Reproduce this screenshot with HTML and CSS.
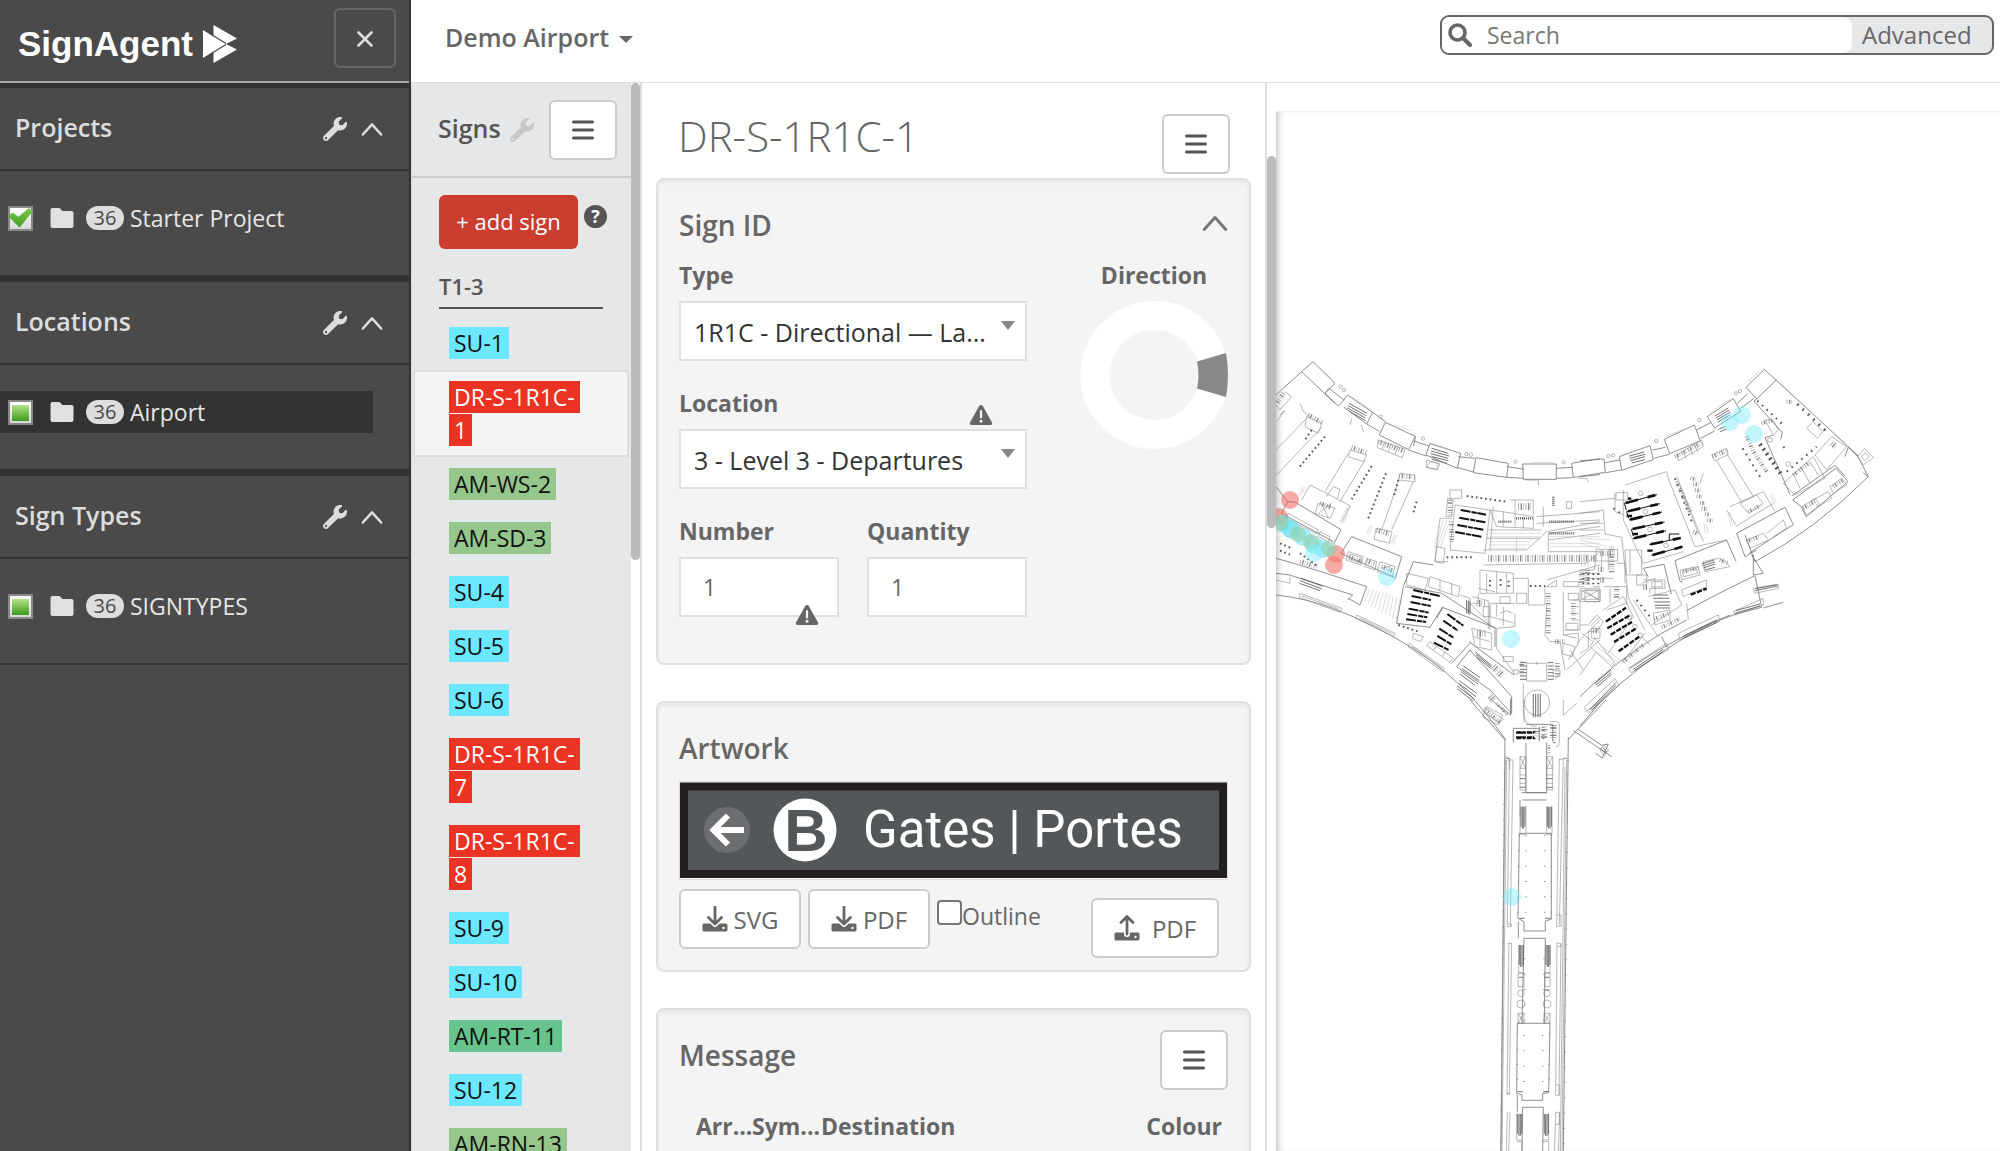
FILE: index.html
```html
<!DOCTYPE html>
<html lang="en">
<head>
    <meta charset="UTF-8">
    <meta name="viewport" content="width=device-width, initial-scale=1.0">
    <title>SignAgent - Demo Airport</title>
    <link rel="stylesheet" href="styles.css">
</head>
<body>
    <!-- shared icons -->
    <svg class="defs" width="0" height="0" aria-hidden="true">
        <symbol id="i-wrench" viewBox="0 0 512 512">
            <path d="M507.73 109.1c-2.24-9.03-13.54-12.09-20.12-5.51l-74.36 74.36-67.88-11.31-11.31-67.88 74.36-74.36c6.62-6.62 3.43-17.9-5.66-20.16-47.38-11.74-99.55.91-136.58 37.93-39.64 39.64-50.55 97.1-34.05 147.2L18.74 402.76c-24.99 24.99-24.99 65.51 0 90.5 24.99 24.99 65.51 24.99 90.5 0l213.21-213.21c50.12 16.71 107.47 5.68 147.37-34.22 37.07-37.07 49.7-89.32 37.91-136.73zM64 472c-13.25 0-24-10.75-24-24 0-13.26 10.75-24 24-24s24 10.74 24 24c0 13.25-10.75 24-24 24z"/>
        </symbol>
        <symbol id="i-up" viewBox="0 0 24 24">
            <path d="M2 18 12 7l10 11" fill="none" stroke="currentColor" stroke-width="2.8" stroke-linecap="round" stroke-linejoin="round"/>
        </symbol>
        <symbol id="i-folder" viewBox="0 0 24 22">
            <path d="M2.500 1h7l3 3h9a2 2 0 0 1 2 2v13a2 2 0 0 1-2 2h-19a2 2 0 0 1-2-2V3a2 2 0 0 1 2-2z"/>
        </symbol>
        <symbol id="i-menu" viewBox="0 0 24 24">
            <path d="M2.500 4h19M2.500 12h19M2.500 20h19" fill="none" stroke="currentColor" stroke-width="3" stroke-linecap="round"/>
        </symbol>
        <symbol id="i-warn" viewBox="0 0 24 22">
            <path d="M10.300 1.800Q12 0 13.700 1.800L23 18.500Q23.600 21 21.500 21h-19Q.4 21 1 18.500z"/>
            <path d="M12 7v6.500" stroke="#f4f4f4" stroke-width="2.200" stroke-linecap="round"/>
            <circle cx="12" cy="17.200" r="1.500" fill="#f4f4f4"/>
        </symbol>
        <symbol id="i-download" viewBox="0 0 26 26">
            <rect x=".5" y="17.500" width="25" height="8" rx="1.500"/>
            <path d="M7 12l6 6 6-6" fill="none" stroke="#fff" stroke-width="6" stroke-linecap="round" stroke-linejoin="round"/>
            <path d="M13 1v17M6.500 11.500 13 18l6.500-6.500" fill="none" stroke="currentColor" stroke-width="2.800" stroke-linecap="round" stroke-linejoin="round"/>
            <circle cx="21.500" cy="22" r="1.200" fill="#fff"/>
        </symbol>
        <symbol id="i-upload" viewBox="0 0 26 26">
            <rect x=".5" y="17.500" width="25" height="8" rx="1.500"/>
            <path d="M13 4v15" fill="none" stroke="#fff" stroke-width="6" stroke-linecap="round"/>
            <path d="M13 19V2M7 7.500 13 1.500l6 6" fill="none" stroke="currentColor" stroke-width="2.800" stroke-linecap="round" stroke-linejoin="round"/>
            <circle cx="21.500" cy="22" r="1.200" fill="#fff"/>
        </symbol>
    </svg>

    <aside class="sidebar">
        <div class="brand">
            <a class="logo" href="#">SignAgent
                <svg width="34" height="38" viewBox="0 0 34 38">
                    <path d="M0 5l9.500 6v16L0 33z" fill="#fff"/>
                    <path d="M9 11 23 19 9 27z" fill="#fff"/>
                    <path d="M10.500 0 34 13.500 23 19l11 5.500L10.500 38z" fill="#fff"/>
                    <path d="M10 10.500 23 18.500M10 27.500l13-8" stroke="#4a4a4a" stroke-width="1.200"/>
                </svg>
            </a>
            <button class="close-btn" type="button" aria-label="Close menu">
                <svg width="16" height="16" viewBox="0 0 16 16"><path d="M1.500 1.500l13 13M14.500 1.500l-13 13" stroke="#ddd" stroke-width="2.600" stroke-linecap="round"/></svg>
            </button>
        </div>

        <section class="group">
            <div class="group-head">
                <h2>Projects</h2>
                <svg class="wrench"><use href="#i-wrench"/></svg>
                <svg class="chevron"><use href="#i-up"/></svg>
            </div>
            <div class="group-body">
                <label class="node">
                    <input class="tick" type="checkbox" checked>
                    <svg class="folder"><use href="#i-folder"/></svg>
                    <span class="count">36</span>Starter Project
                </label>
            </div>
        </section>

        <section class="group">
            <div class="group-head">
                <h2>Locations</h2>
                <svg class="wrench"><use href="#i-wrench"/></svg>
                <svg class="chevron"><use href="#i-up"/></svg>
            </div>
            <div class="group-body">
                <label class="node node-active">
                    <input class="tick tick-part" type="checkbox">
                    <svg class="folder"><use href="#i-folder"/></svg>
                    <span class="count">36</span>Airport
                </label>
            </div>
        </section>

        <section class="group">
            <div class="group-head">
                <h2>Sign Types</h2>
                <svg class="wrench"><use href="#i-wrench"/></svg>
                <svg class="chevron"><use href="#i-up"/></svg>
            </div>
            <div class="group-body">
                <label class="node">
                    <input class="tick tick-part" type="checkbox">
                    <svg class="folder"><use href="#i-folder"/></svg>
                    <span class="count">36</span>SIGNTYPES
                </label>
            </div>
        </section>
    </aside>

    <div class="app">
        <header class="topbar">
            <button class="project-btn" type="button">Demo Airport <span class="caret"></span></button>
            <form class="search">
                <div class="search-box">
                    <svg width="24" height="24" viewBox="0 0 24 24"><circle cx="9.500" cy="9.500" r="7.500" fill="none" stroke="#666" stroke-width="3.600"/><path d="M15 15l7 7" stroke="#666" stroke-width="4" stroke-linecap="round"/></svg>
                    <input type="text" placeholder="Search" aria-label="Search">
                </div>
                <button class="advanced" type="button">Advanced</button>
            </form>
        </header>

        <div class="columns">
            <nav class="signs">
                <div class="signs-head">
                    <h2>Signs</h2>
                    <svg class="wrench"><use href="#i-wrench"/></svg>
                    <button class="menu-btn" type="button" aria-label="Signs menu"><svg><use href="#i-menu"/></svg></button>
                </div>
                <div class="signs-tools">
                    <button class="add-btn" type="button">+ add sign</button>
                    <span class="help">?</span>
                </div>
                <h3 class="level">T1-3</h3>
                <ul class="sign-list">
                    <li><a class="tag su" href="#">SU-1</a></li>
                    <li class="selected"><a class="tag dr" href="#">DR-S-1R1C-1</a></li>
                    <li><a class="tag am" href="#">AM-WS-2</a></li>
                    <li><a class="tag am" href="#">AM-SD-3</a></li>
                    <li><a class="tag su" href="#">SU-4</a></li>
                    <li><a class="tag su" href="#">SU-5</a></li>
                    <li><a class="tag su" href="#">SU-6</a></li>
                    <li><a class="tag dr" href="#">DR-S-1R1C-7</a></li>
                    <li><a class="tag dr" href="#">DR-S-1R1C-8</a></li>
                    <li><a class="tag su" href="#">SU-9</a></li>
                    <li><a class="tag su" href="#">SU-10</a></li>
                    <li><a class="tag rt" href="#">AM-RT-11</a></li>
                    <li><a class="tag su" href="#">SU-12</a></li>
                    <li><a class="tag am" href="#">AM-RN-13</a></li>
                </ul>
            </nav>
            <div class="scroll scroll-signs"><span></span></div>

            <main class="detail">
                <div class="detail-head">
                    <h1>DR-S-1R1C-1</h1>
                    <button class="menu-btn" type="button" aria-label="Sign menu"><svg><use href="#i-menu"/></svg></button>
                </div>

                <section class="panel panel-id">
                    <div class="panel-head">
                        <h2>Sign ID</h2>
                        <svg class="chevron"><use href="#i-up"/></svg>
                    </div>
                    <div class="id-grid">
                        <div class="fields">
                            <div class="field wide">
                                <label for="type">Type</label>
                                <div class="select">
                                    <select id="type"><option>1R1C - Directional — La...</option></select>
                                </div>
                            </div>
                            <div class="field wide">
                                <label for="location">Location</label>
                                <div class="select">
                                    <select id="location"><option>3 - Level 3 - Departures</option></select>
                                    <svg class="warn warn-top"><use href="#i-warn"/></svg>
                                </div>
                            </div>
                            <div class="field">
                                <label for="number">Number</label>
                                <div class="box">
                                    <input id="number" type="text" value="1">
                                    <svg class="warn warn-bottom"><use href="#i-warn"/></svg>
                                </div>
                            </div>
                            <div class="field">
                                <label for="quantity">Quantity</label>
                                <div class="box"><input id="quantity" type="text" value="1"></div>
                            </div>
                        </div>
                        <div class="direction">
                            <span>Direction</span>
                            <svg width="148" height="150" viewBox="0 0 148 150">
                                <circle cx="74.500" cy="75" r="59.500" fill="none" stroke="#fff" stroke-width="29"/>
                                <path d="M117 61.500 146 53q4 22 0 44l-29-8.500q3-13.500 0-27z" fill="#888"/>
                            </svg>
                        </div>
                    </div>
                </section>

                <section class="panel panel-art">
                    <div class="panel-head"><h2>Artwork</h2></div>
                    <svg class="artwork" viewBox="0 0 549 99">
                        <rect x=".5" y=".5" width="548" height="98" fill="#fff" stroke="#ddd"/>
                        <rect x="1" y="1.500" width="547" height="95.500" fill="#231f20"/>
                        <rect x="9" y="9.500" width="531" height="79.500" fill="#54575a"/>
                        <circle cx="48" cy="49" r="23" fill="#6d6e71"/>
                        <path d="M65 49H34M49 34.500 34.500 49 49 63.500" fill="none" stroke="#fff" stroke-width="6"/>
                        <circle cx="126" cy="49" r="31.500" fill="#fff"/>
                        <text class="art-letter" x="127" y="70" text-anchor="middle">B</text>
                        <text class="art-text" x="184" y="66">Gates | Portes</text>
                    </svg>
                    <div class="art-tools">
                        <button class="file-btn" type="button"><svg><use href="#i-download"/></svg>SVG</button>
                        <button class="file-btn" type="button"><svg><use href="#i-download"/></svg>PDF</button>
                        <label class="outline"><input type="checkbox">Outline</label>
                        <button class="file-btn upload" type="button"><svg><use href="#i-upload"/></svg>PDF</button>
                    </div>
                </section>

                <section class="panel panel-msg">
                    <div class="panel-head">
                        <h2>Message</h2>
                        <button class="menu-btn" type="button" aria-label="Message menu"><svg><use href="#i-menu"/></svg></button>
                    </div>
                    <table class="message">
                        <thead>
                            <tr><th class="c-arrow">Arr...</th><th class="c-symbol">Sym...</th><th>Destination</th><th class="c-colour">Colour</th></tr>
                        </thead>
                    </table>
                </section>
            </main>
            <div class="scroll scroll-detail"><span></span></div>

            <div class="map">
                <svg class="plan" viewBox="1276 83 724 1068" preserveAspectRatio="xMinYMin slice">
                    <!-- west wing -->
                    <g class="ink" transform="translate(1270 340) scale(.3333)">
                        <g class="wall">
                            <path d="M18 165 95 95 129 65 195 130 165 160M95 95l100 95M165 160l12-15 45 35-17 18zM222 180l10-15 76 52-18 35-68-50M308 217l38 28M290 252l38 22M328 285l18-38 90 42-20 40zM436 290l-5 28M416 330l52 18M432 303l45 15M468 345l12-35 92 30-10 45zM565 350l50 5M560 382l50 14M610 398l8-45 97 17-5 42zM712 380l50 8M710 412l50 3M758 372h101v46H760zM860 385l48-3M860 415l48-2M905 370l85-14M905 370l5 42 80-8"/>
                            <path d="M18 655q110 30 272 85l-20 55-35-20M18 765q90 10 170 40 130 50 240 120 110 70 190 160 50 60 90 115M18 700l40 5 190 60-15 15"/>
                            <path d="M18 440l35 45 23 2 137 82-20 40M53 485l-18 35 155 85M213 640l32-50 150 60-20 68M213 640l160 72M400 740l30-75 60 10M380 850l100 12 37-60 160 62M380 850l20-110M405 740l110 20 160 105 0 55M520 800l-20 35M597 905l135 100M560 980l100 70 65 70v-50L600 930zM545 970l55-60M722 1075v50l-30-25"/>
                        </g>
                        <g class="thin">
                            <path d="M110 230l45 20-10 30-40-20zM110 235 18 330M155 262 20 405M240 330l50 15-10 20-45-15zM235 340l-70 115M285 360l-75 125M390 400l45 5v20l-50-5zM385 425l-50 145M430 425l-65 145M318 565l48 10-8 35-45-12zM120 435l120 62-25 50M120 435l-25 45M145 490l50 15-15 30-45-15zM145 520l40-30M155 490l20 45M325 300l80 28-8 25-75-30zM345 305l-10 25M365 310l-10 25M385 318l-10 25M45 155l20 15-35 40-12-15M90 190l10 25 20 15M30 225l15-15-25 35M470 360l40 12-8 18-34-10zM170 470l20-30 20 8-8 28"/>
                            <path d="M540 450h35v25h-35zM533 475l17 5-5 50h-17zM555 495l105 15-15 130-105-10zM545 535h-35l-15 130h40M500 620l25 5-5 45-25-5zM660 510l70 10 60 10v35l-110-5zM720 480h70v45M735 480v80M700 515v45M760 530v35M640 630h130l60-55 160-30M655 570h160M650 595h160M640 675l310-5 40-35M670 500l-10 130M800 530l190-15M800 550l190-10M835 580l155-20M835 600l155-20M835 635h155M835 580v55M820 500v60M890 485v20h15v-20zM630 690l100 10v60h-100zM650 700v60M680 695v65M710 700v60M730 715h45v80M625 745l50 10M775 795h50v-60M830 720l160-45M830 740l30-20v20zM880 725h45v15h-45zM930 700h60M970 740h20M660 790h75M680 790v40M700 800v55M660 830l75 20M735 820v40l-55 5v60l50 70M830 795l-5 90 15 20h30l15 85M880 755v130l40 10M910 780h20v90h-45M880 885l45-5v30l-30 50M920 910l70-70M890 990l100-90M940 990l-40-60M870 1000l-15 18M770 970h60v53h-60z"/>
                            <path d="M410 700l65 15-10 35-55-15zM480 710l90 30-5 30-90-30zM510 720v35M545 730v35M570 765l30 10v40M605 770l50 12v85M660 790v80M605 865l60 15v50l-50-10zM610 890l50 15M630 868v50M235 635l45 15-7 25-45-15zM240 642l34 11-4 14-34-11zM290 655l30 10-5 25-30-10zM330 665l45 15-8 30-45-15zM335 685l30-8M55 520l90 50-5 12-92-48zM150 575l30 15-5 15-30-15zM60 710v20l-42-10M90 760l125 45-5 12-122-45zM96 768l112 40M260 825l115 55-5 10-113-55zM268 834l100 48M418 910l105 75-5 10-103-75zM426 920l90 65M430 880l30 10-8 15-25-10zM480 905l70 50-10 12-70-50zM500 918l-8 12M525 935l-8 14M650 1100l48 25-15 30-45-25zM655 1070l55 50M760 1030v80q0 50 40 50M800 965v10M480 365l25 5-5 18-30-5zM765 420h40v15M245 235l-5 20M275 255l5 20M925 415h25l5 12"/>
                            <path d="M600 790l60 60M625 760v30h-20M640 800h20v30h-20zM690 770h30v20h-30zM740 760h30v30h-30zM690 820l20-8 18 8M895 760h30v20h-30zM945 750h45v35h-45zM950 755l38 26M888 850h36v20h-36zM880 910l35 10-8 30-30-8zM960 860l30-30M935 880l30 22M905 800h22M905 820h22M905 840h22M745 990h-14v12h14zM850 990h20v20h-20zM700 950h30v15h-30z"/>
                        </g>
                        <circle class="thin" cx="801" cy="1088" r="38"/>
                        <g class="thin">
                            <circle cx="211" cy="140" r="5"/><circle cx="222" cy="150" r="5"/><circle cx="332" cy="230" r="5"/><circle cx="459" cy="296" r="5"/><circle cx="589" cy="342" r="5"/><circle cx="603" cy="344" r="5"/><circle cx="736" cy="365" r="5"/><circle cx="881" cy="367" r="5"/>
                        </g>
                        <path class="faint" d="M150 85l35 30M375 255l50 18M480 313l85 25M785 367h65M245 170l60 40"/>
                        <path class="faint" d="M300 745l-16 40M310 748l-16 44M320 751l-16 48M330 754l-16 50M340 757l-15 54M350 760l-14 58M360 764l-13 60M370 768l-12 62M380 772l-12 64M390 776l-12 66M540 540l-30 85M530 540l-28 85M520 540l-22 85M510 540l-16 85M660 580h150M660 590h150M660 605h120M660 615h120M660 625h110M740 590v50M840 590h150M840 610h150M840 620h150M105 440l-14 30M100 437l-14 30M240 500l-20 50M232 500l-22 46M380 585l-12 30M374 583l-12 30M308 555l-12 30M302 553l-12 30"/>
                        <path class="bars" d="M237 190l54 30M234 197l54 30M232 204l54 30M237 214l50 28M485 325l50 15M483 333l54 15M482 341l52 14M485 350l50 12M485 358l46 12M92 714l66 25M90 722l66 25M88 730l62 22M580 978l50 35M576 986l52 36M572 994l52 38M570 1002l45 34M568 1022l52 38M566 1030l52 40M562 1038l52 40M562 1046l48 38M615 935l50 42M618 943l46 38M620 951l42 34M750 968h20M750 978h20M750 988h20M750 998h20M750 1008h20M750 1018h20M833 968h18M833 978h18M833 988h18M833 998h18M833 1008h18M833 1018h18M790 1062v70M797 1062v70M804 1062v70M811 1062v70M590 780v40M595 782v40M600 784v40"/>
                        <path class="belts" stroke-width="6" stroke-dasharray="30 3 16 2" d="M572 510l76 14M568 533l78 14M562 555l78 14M556 576l78 14M430 750l80 18M425 768l58 12M422 786l60 12M416 806l60 12M412 822l60 10M408 838l60 8M532 822l48 35M520 842l44 30M508 866l44 28M502 888l44 26M492 908l44 22M738 1178h54M738 1192h54"/>
                        <path class="marks" stroke-width="6" stroke-dasharray="5 9" d="M590 468l125 18M530 652h75M125 270l-20 30M165 290l-80 95M305 378l-60 100M348 400l-55 140M440 485l-12 40M385 420l-12 45M30 610l35 15M30 632l30 12M90 640l55 40M660 720v25M692 718v25M716 722v20M940 700v40M955 700v40M970 700v40M985 700v40M780 738h45M385 855l60 20"/>
                        <path class="marks" stroke-width="7" stroke-dasharray="3 3" d="M838 545h74M838 580h76M850 470v30M738 535h50M685 545h40"/>
                        <path class="rooms" stroke-width="20" d="M655 655h320M745 500h40M670 980l30 30M660 1070l15 15M800 1165v30M822 1160v35M850 1155v40M622 880h25M620 790h25"/>
                        <path class="rooms" stroke-width="14" d="M115 225l42 22M245 322l44 16M388 408l46 4M238 652l38 14M290 662l25 10M335 680l32 12M320 570l40 12M150 490l34 12M325 305l75 28M40 160l-20 30M90 665l50 15M855 905h30M545 545v60M540 480v50M835 760v120M910 790v50M755 965v40M862 970v40"/>
                    </g>

                    <!-- east wing -->
                    <g class="ink" transform="translate(1580 340) scale(.3333)">
                        <g class="wall">
                            <path d="M0 362l72-5 4 40-76 12M75 368l45-8M78 398l45-8M118 350l92-33 10 42-95 32zM218 330l38-8M222 355l45-12M253 298l90-43 18 48-92 38zM350 270l42-22M362 295l42-22M382 230l78-54 22 38-78 50zM472 190l30-28M482 205l40-30M498 142l55-54 250 230 28 30M498 142l32 35 60-58M530 177l-8 6 85 95-5 20M580 285l-25 8 75 170M635 468l130-92 30 32M638 480l130-95 36 40-125 105-15-30zM795 350l10-28 25 20 35 68q-160 160-340 255l-30-80M865 410l-15-12M470 580l145-78 25 52-132 85M470 580l25 70 35-20"/>
                            <path d="M285 662l155-62 28 64M285 662l15 62 8 2M190 685l62-12 22 90M190 685l15 25M320 812q80-45 205-105l20 95q-150 30-285 125Q100 1030 0 1158M515 645l35 55-30 5v-60M0 1070q110-110 245-190l75-40M245 890l15 32M150 985q130-90 300-160M610 787l-60 17"/>
                        </g>
                        <g class="thin">
                            <path d="M135 435l125-40 5 20M265 415l80 205 95-20M290 410l80 195M300 440l55 140M395 345l45-20 5 18-40 20zM410 362l75 125M440 340l80 130M480 490l50-25 20 25-45 30zM450 500l100-45 35 60M440 510l30 48 110-68M290 345l75-45 5 20-75 42zM310 335l8 20M330 325l8 20M345 315l8 20M370 400l-10 30M108 458h35v22h-35zM105 460v55l25 10M130 450v90l60 130 120-35M0 485l105-10M0 520l70-10 5 72 50 10 20 180 50 100M0 550h70M0 570h70M48 628h65v35H48zM48 650l-5 40h-43M65 630v55M85 630v60M110 670h25v60M0 745h60v40H0zM70 740h70v50l-60 20M90 745v45M0 715h100M135 630h50v75h-45zM150 630v70M190 720h65v25h-45v15M185 730l40-15v45M205 770l80-20 20 45-90 60M160 780l75 110M320 790l5 50"/>
                            <path d="M300 690l55-10 5 25-55 15zM307 694l42-8 4 14-42 10zM370 665l45-10 20 10 15 15-75 15zM305 750l75-30v20l-70 30zM665 500l40-25 15 20-40 30zM700 480l45-25 10 20-40 25zM750 440l35-25 15 20-40 25zM500 600l50-20 15 20-55 25zM560 580l50-40 10 25-40 25M610 430l90-80 35 65-90 50zM640 400l20 45M665 385l25 45M690 365l25 40M705 345l50-55 45 30-60 70zM680 265l20-20 28 30-15 20zM555 240l25 45 15-15-15-30zM832 350l22-25 26 28-30 22zM845 350l12-12 10 12-12 12zM105 1016l12 20-90 82-15-15zM145 985l115-75 5 18-112 70zM295 880l120-55 5 18-120 58zM460 815l90-40v20l-85 30zM520 745l75-12v12l-70 15zM0 855h25l25-30 20 20-20 30H25v50L0 940M35 865h25v30H35zM30 920l65 60 10-10-60-75zM0 1005l50-70M70 810l60-40 30 60-75 110M195 880l-70 90M185 890l25 25M220 820l50-10v30l-45 15zM5 752h50v26H5zM5 752l50 26M55 752l-50 26M170 705h30v30h-30zM215 725h32v16h-32z"/>
                            <circle cx="85" cy="348" r="5"/><circle cx="99" cy="346" r="5"/><circle cx="229" cy="303" r="5"/><circle cx="358" cy="240" r="5"/><circle cx="468" cy="160" r="5"/><circle cx="480" cy="153" r="5"/><circle cx="570" cy="300" r="7"/><circle cx="625" cy="372" r="7"/><circle cx="182" cy="460" r="7"/><circle cx="196" cy="515" r="7"/><circle cx="210" cy="568" r="7"/><circle cx="258" cy="616" r="7"/><circle cx="148" cy="832" r="7"/><circle cx="165" cy="860" r="7"/><circle cx="180" cy="886" r="7"/>
                        </g>
                        <path class="faint" d="M505 125l30-30M390 218l60-40M258 288l80-30M125 345l80-25M0 600l80 20M0 610l60 15M0 595l90 5M5 640v40M15 640v40M25 640v40M450 515l8 45M444 515l8 45M575 460l15 28M570 465l15 28M372 550l4 30M380 550l4 30M40 930l70 50M50 920l70 50M60 915l60 45M596 124l210 200"/>
                        <path class="bars" d="M405 228l40-24M408 234l40-24M411 240l40-24M414 246l34-20M148 348l44-12M149 355l46-12M151 362l44-12M155 369l40-10M365 672l38-12M367 678l38-12M370 684l36-12M375 690l30-8M220 765h44M220 775h48M222 786h48M224 796h46M225 804h46M45 1030l48-40M48 1035l46-38M52 1040l42-36M160 988l90-60M164 992l84-56M30 1108l78-80M36 1110l72-74M310 888l100-48M308 896l105-50M465 820l75-22M468 812l72-20M525 752l68-14M527 746l64-12M415 268l20-8M420 275l20-8"/>
                        <path class="belts" stroke-width="3" d="M133 490l98-26M140 515l100-24M147 540l99-24M154 568l100-22M158 596l100-24M208 614l94-20M214 646l94-26M133 490l6 20M140 515l6 20M154 568l6 20M268 600v-18h30"/>
                        <path class="belts" stroke-width="8" stroke-dasharray="38 30 24 60" d="M137 489l94-25M144 514l96-23M151 539l95-23M158 567l96-21M162 595l96-23M212 613l90-19M218 645l90-25"/>
                        <path class="belts" stroke-width="7" stroke-dasharray="16 4" d="M78 845l60-42M82 865l66-38M92 884l64-38M102 906l66-40M116 934l62-44M332 764l48-18M144 476h10M140 528h20M158 582h20M202 632h20"/>
                        <path class="marks" stroke-width="9" stroke-dasharray="5 17" d="M652 192l95 90"/>
                        <path class="marks" stroke-width="12" stroke-dasharray="6 11" d="M540 312l62 88"/>
                        <path class="marks" stroke-width="6" stroke-dasharray="5 14" d="M488 325l55 90M610 320l5 5M532 182l75 70M620 395l90-75M170 780l40 50M285 415l50 130M100 505l30 20"/>
                        <path class="rooms" stroke-width="12" d="M332 414l18 5M340 432l18 3M345 450l18 3M350 468l18 3M360 488l18 3M365 505l18 3M375 522l18 3M382 540l18 3M290 425l40 90M545 250l35-10M398 350l42-18M285 350l80-40M310 695l45-12M420 660l25 10M670 505l36-22M760 440l30-20M500 604l40-14M505 515l40-20M640 405l50-38M620 185h18M340 575l20 10M245 862l55-26M222 838l45-18M130 965l60-50M500 290l20 45 40 60"/>
                        <path class="rooms" stroke-width="16" d="M5 695v45M22 690v45M55 688h20M60 640h45M190 742h15M110 740v35M40 872h18M60 720h15M95 620v80M755 310l12 10"/>
                    </g>

                    <!-- pier -->
                    <g class="ink" transform="translate(1440 700) scale(.3333)">
                        <g class="wall">
                            <path d="M90 0l105 120-12 1233M385 112l-15 1241M385 118 498 0M400 92l115 78M415 88l70 48 20-4-18 42-20-14M195 175h15M370 175h12M258 128v150h62V128M245 278h75M247 300h73M238 400l-4 255 18 10v28h64v-30l18-5V400zM252 715h64M252 715l-6 255M316 715l-3 255M232 970l-2 210 16 5v16h62v-20l18-3 4-208zM248 1222h62M248 1222l-2 131M310 1222l-2 131M220 85h66M220 85v44M298 80v44M258 73h80v52M240 300v50M235 665v50M232 1185v50"/>
                        </g>
                        <g class="thin">
                            <path d="M197 168l12 8v34M200 180l-14 1173M196 180l-14 1173M219 180l-8 500M208 180l-6 500M202 180h17M202 672h12v8h-12M215 730l-7 455M207 730l-6 455M202 730h14M200 1180h12M210 1237l-4 116M202 1237l-3 116M370 176l-12 500M358 176l-8 504M357 178h12M350 645h13v34h-12M363 730l-6 455M351 730l-4 455M350 730h12v10h-12M346 1155h12v32h-12M359 1237l-4 116M347 1237l-3 116M346 1237h12v36h-12M375 200l-14 1153M380 180l-14 1173M240 170h17v100h-17zM320 170h18v100h-18zM240 205h17M320 205h18M240 225h17M320 225h18M240 250h17M320 250h18M240 345v58h18v-85M320 318v85h16v-85M236 735v83h16M314 818h16v-83M234 820h18v40h-18zM314 820h16v40h-16zM234 940h18v30h-18zM312 940h18v30h-18zM230 1240v80h16M326 1240v80h-18M230 1325h16v28M308 1325h18v28M240 170l17 35M257 170l-17 35M320 170l18 35M338 170l-18 35M234 940l18 30M252 940l-18 30M312 940l18 30M330 940l-18 30M480 150l10-14 16 14-14 18z"/>
                            <circle cx="243" cy="880" r="10"/><circle cx="243" cy="912" r="12"/><circle cx="321" cy="880" r="10"/><circle cx="321" cy="912" r="12"/>
                            <path d="M330 65h20q8 0 8 10v55q0 10-10 10M370 0v46M370 46 410 10M435 35 490 0M450 30 497-15M212 0v44M252 0v70M130 35l50 38M135 22l55 35-10 12-50-35zM160 5l45 40"/>
                        </g>
                        <path class="bars" d="M243 320v60M247 320v66M251 320v66M255 320v60M322 320v60M326 320v66M330 320v66M334 320v60M238 735v60M242 735v66M246 735v66M250 735v60M318 735v60M322 735v66M326 735v66M330 735v60M233 1242v60M237 1242v66M241 1242v66M245 1242v60M313 1242v60M317 1242v66M321 1242v66M325 1242v60M482 146l14 14M488 142l12 14M240 236h16M320 236h18M240 262h16M320 262h18M314 832h14M236 832h12M316 870h12M238 655h16M316 655h16M232 1175h16M310 1175h16"/>
                        <path class="belts" stroke-width="5" stroke-dasharray="14 4 8 4" d="M230 96h56M230 115h56"/>
                        <path class="rooms" stroke-width="8" d="M343 75v55M327 135v30M310 82v14M310 106v12M170 10l30 35M138 30l42 36"/>
                        <path class="dots" d="M258 405v250M314 405v250M254 775v190M312 775v190M252 1005v160M308 1005v160"/>
                        <path class="dots" d="M193 220l-10 1130M384 180l-12 1170M238 405l-4 250M334 405v250M232 1000v160M328 1000v160"/>
                    </g>

                    <!-- sign pins -->
                    <g class="pins">
                        <g fill="#ee5a52">
                            <circle cx="1290" cy="500" r="9"/><circle cx="1279" cy="517" r="9"/><circle cx="1336" cy="554" r="9"/><circle cx="1334" cy="565" r="9"/>
                        </g>
                        <g fill="#5ce1f2">
                            <circle cx="1284" cy="524" r="9"/><circle cx="1290" cy="529" r="9"/><circle cx="1303" cy="537" r="9"/><circle cx="1292" cy="530" r="9"/><circle cx="1314" cy="545" r="9"/><circle cx="1323" cy="549" r="9"/>
                        </g>
                        <g fill="#7fc49a">
                            <circle cx="1281" cy="523" r="8"/><circle cx="1298" cy="534" r="8"/><circle cx="1311" cy="542" r="8"/><circle cx="1329" cy="549" r="8"/>
                        </g>
                        <g class="pins-soft">
                            <circle cx="1314" cy="553" r="9"/><circle cx="1387" cy="577" r="9"/><circle cx="1511" cy="639" r="9"/><circle cx="1730" cy="422" r="9"/><circle cx="1742" cy="415" r="9"/><circle cx="1754" cy="434" r="9"/><circle cx="1512" cy="897" r="9"/>
                        </g>
                    </g>
                </svg>
            </div>
        </div>
    </div>
</body>
</html>
```
FILE: styles.css
```css
* {
    box-sizing: border-box;
}
body {
    margin: 0;
    height: 100vh;
    display: flex;
    overflow: hidden;
    font-family: 'Open Sans', 'Noto Sans', sans-serif;
    font-size: 23px;
    color: #666;
    background: #fff;
}
h1, h2, h3, ul {
    margin: 0;
    padding: 0;
}
h2 {
    font-size: 25px;
    font-weight: 600;
}
button, input, select {
    font-family: inherit;
    font-size: inherit;
    color: inherit;
    margin: 0;
}
button {
    cursor: pointer;
}
a {
    text-decoration: none;
}
.defs {
    position: absolute;
}

/* Sidebar */
.sidebar {
    width: 411px;
    flex-shrink: 0;
    background: #4a4a4a;
    border-right: 2px solid #333;
    color: #ddd;
}
.brand {
    height: 83px;
    padding: 8px 13px 0 18px;
    display: flex;
    justify-content: space-between;
    align-items: flex-start;
    border-bottom: 2px solid #aaa;
}
.logo {
    display: flex;
    align-items: center;
    gap: 10px;
    margin-top: 16px;
    font-family: 'Liberation Sans', Arial, sans-serif;
    font-size: 35px;
    font-weight: 700;
    line-height: 40px;
    color: #fff;
}
.close-btn {
    width: 62px;
    height: 60px;
    background: none;
    border: 2px solid #666;
    border-radius: 6px;
}
.group {
    border-top: 7px solid #333;
}
.brand + .group {
    border-top-width: 5px;
}
.group:last-child {
    border-bottom: 2px solid #333;
}
.group-head {
    height: 83px;
    padding: 0 26px 0 15px;
    display: flex;
    align-items: center;
    gap: 14px;
    border-bottom: 2px solid #333;
}
.group-head h2 {
    flex: 1;
    padding-bottom: 3px;
}
.wrench {
    width: 24px;
    height: 24px;
    fill: currentColor;
}
.chevron {
    width: 22px;
    height: 24px;
}
.group-body {
    height: 104px;
    padding: 26px 36px 0 0;
}
.node {
    height: 42px;
    padding-left: 8px;
    display: flex;
    align-items: center;
    color: #e6e6e6;
}
.node-active {
    background: #333;
}
.folder {
    width: 24px;
    height: 22px;
    margin: 0 12px 0 17px;
    fill: #e0e0e0;
}
.count {
    width: 38px;
    height: 24px;
    margin-right: 6px;
    border-radius: 12px;
    background: #ddd;
    color: #4a4a4a;
    font-size: 20px;
    line-height: 24px;
    text-align: center;
}
.tick {
    appearance: none;
    width: 25px;
    height: 25px;
    border: 2px solid #888;
    background: linear-gradient(#fff, #d8d8d8);
    position: relative;
}
.tick:checked::after {
    content: "";
    position: absolute;
    inset: 0 -2px 1px -2px;
    background: linear-gradient(#7cc84e, #3f9d1f);
    clip-path: polygon(0 42%, 18% 26%, 42% 46%, 84% 2%, 100% 18%, 46% 100%);
}
.tick-part::after {
    content: "";
    position: absolute;
    inset: 3px 2px 2px 2px;
    background: linear-gradient(#b4e388, #3e9a1d);
}

/* Top bar */
.app {
    flex: 1;
    min-width: 0;
    display: flex;
    flex-direction: column;
}
.topbar {
    height: 83px;
    flex-shrink: 0;
    padding: 15px 6px 0 34px;
    display: flex;
    justify-content: space-between;
    align-items: flex-start;
    border-bottom: 1px solid #ddd;
}
.project-btn {
    display: flex;
    align-items: center;
    gap: 10px;
    height: 44px;
    padding: 0;
    border: 0;
    background: none;
    font-size: 25px;
    font-weight: 600;
}
.caret {
    margin-top: 4px;
    border: 7px solid transparent;
    border-top-color: #666;
    border-bottom: 0;
}
.search {
    width: 554px;
    height: 40px;
    display: flex;
    border: 2px solid #666;
    border-radius: 9px;
    background: #e6e7e8;
    overflow: hidden;
}
.search-box {
    flex: 1;
    display: flex;
    align-items: center;
    padding-left: 6px;
    gap: 13px;
    background: #fff;
    border-radius: 0 9px 9px 0;
}
.search-box input {
    flex: 1;
    min-width: 0;
    border: 0;
    padding: 0 2px;
    background: none;
    outline: none;
}
.search-box input::placeholder {
    color: #777;
    opacity: 1;
}
.advanced {
    width: 140px;
    padding: 0 18px 0 10px;
    border: 0;
    background: none;
    text-align: left;
    font-size: 24px;
    line-height: 34px;
}

/* Signs list */
.columns {
    flex: 1;
    min-height: 0;
    display: flex;
}
.signs {
    width: 220px;
    flex-shrink: 0;
    overflow: hidden;
    background: #e6e7e8;
    border-left: 1px solid #ddd;
}
.signs-head {
    height: 95px;
    padding: 17px 14px 0 26px;
    display: flex;
    align-items: flex-start;
    border-bottom: 2px solid #ccc;
    color: #555;
}
.signs-head h2 {
    line-height: 56px;
}
.signs-head .wrench {
    margin: 18px auto 0 9px;
    color: #c8c8c8;
}
.menu-btn {
    width: 68px;
    height: 60px;
    padding: 0;
    display: flex;
    align-items: center;
    justify-content: center;
    flex-shrink: 0;
    border: 2px solid #ccc;
    border-radius: 6px;
    background: #fff;
    color: #555;
}
.menu-btn svg {
    width: 24px;
    height: 24px;
}
.signs-tools {
    padding: 17px 0 0 27px;
    display: flex;
    gap: 6px;
    align-items: flex-start;
}
.add-btn {
    width: 139px;
    height: 54px;
    padding: 0 0 2px;
    border: 0;
    border-radius: 6px;
    background: #cb3d2e;
    color: #fff;
    font-size: 22px;
}
.help {
    width: 23px;
    height: 23px;
    margin-top: 10px;
    border-radius: 50%;
    background: #555;
    color: #fff;
    font-size: 18px;
    font-weight: 700;
    line-height: 23px;
    text-align: center;
}
.level {
    margin: 22px 28px 7px 27px;
    padding-bottom: 6px;
    border-bottom: 2px solid #555;
    color: #555;
    font-size: 22px;
    font-weight: 600;
    line-height: 30px;
}
.sign-list {
    list-style: none;
    line-height: 33px;
}
.sign-list li {
    margin: 0 2px 0 1px;
    padding: 9px 45px 8px 34px;
    border: 2px solid transparent;
}
.sign-list .selected {
    background: #f4f4f4;
    border-color: #ddd;
}
.tag {
    padding: 0 5px;
    color: #111;
    -webkit-box-decoration-break: clone;
    box-decoration-break: clone;
}
.su { background: #6be8ff; }
.dr { background: #eb3323; color: #fff; }
.am { background: #95c68b; }
.rt { background: #66c48c; }

/* Scroll bars */
.scroll {
    width: 11px;
    flex-shrink: 0;
    border-right: 2px solid #ddd;
    background: #fff;
}
.scroll span {
    display: block;
    width: 9px;
    border-radius: 5px;
    background: #bbb;
}
.scroll-signs span {
    height: 477px;
}
.scroll-detail {
    padding-top: 73px;
    border-left: 2px solid #ddd;
    border-right: 0;
}
.scroll-detail span {
    height: 372px;
}

/* Sign detail */
.detail {
    width: 623px;
    flex-shrink: 0;
    padding: 31px 14px 0;
    overflow: hidden;
}
.detail-head {
    padding: 0 21px 4px 22px;
    display: flex;
    justify-content: space-between;
    align-items: flex-start;
}
.detail-head h1 {
    font-size: 42px;
    font-weight: 300;
    line-height: 44px;
}
.panel {
    margin-bottom: 36px;
    padding: 25px 21px 12px;
    border: 2px solid #e0e0e0;
    border-radius: 8px;
    background: #f4f4f4;
    box-shadow: inset 0 3px 4px rgba(0, 0, 0, 0.05);
}
.panel-id {
    padding-bottom: 46px;
}
.panel-head {
    display: flex;
    justify-content: space-between;
    align-items: flex-start;
    margin-bottom: 13px;
}
.panel-id .panel-head {
    margin-bottom: 14px;
}
.panel-head h2 {
    font-size: 28px;
    line-height: 40px;
}
.panel-head .chevron {
    width: 26px;
    height: 36px;
    color: #777;
}
.id-grid {
    display: flex;
    justify-content: space-between;
}
.fields {
    width: 348px;
    display: grid;
    grid-template-columns: 1fr 1fr;
    gap: 26px 28px;
}
.wide {
    grid-column: 1 / 3;
}
.field label {
    display: block;
    margin-bottom: 10px;
    font-weight: 700;
    line-height: 32px;
}
.select, .box {
    position: relative;
}
.field select, .field input {
    appearance: none;
    display: block;
    width: 100%;
    height: 60px;
    padding: 0 22px;
    border: 2px solid #e0e0e0;
    border-radius: 0;
    background: #fff;
}
.field select {
    padding: 2px 30px 0 13px;
    color: #333;
    font-size: 25px;
}
.select::after {
    content: "";
    position: absolute;
    right: 12px;
    top: 20px;
    border: 7px solid transparent;
    border-top: 9px solid #888;
    border-bottom: 0;
}
.warn {
    position: absolute;
    width: 24px;
    height: 22px;
    fill: #666;
}
.warn-top {
    right: 34px;
    top: -25px;
}
.warn-bottom {
    right: 20px;
    bottom: -9px;
}
.direction {
    width: 148px;
    display: flex;
    flex-direction: column;
    align-items: center;
    gap: 9px;
    font-weight: 700;
    line-height: 32px;
}
.artwork {
    display: block;
    width: 100%;
}
.art-letter {
    font-family: 'Liberation Sans', Arial, sans-serif;
    font-size: 60px;
    font-weight: 700;
    fill: #54575a;
}
.art-text {
    font-family: Roboto, sans-serif;
    font-size: 51px;
    fill: #fff;
}
.art-tools {
    margin-top: 9px;
    display: flex;
    align-items: flex-start;
    gap: 7px;
}
.file-btn {
    width: 122px;
    height: 60px;
    padding: 0;
    display: flex;
    align-items: center;
    justify-content: center;
    gap: 6px;
    border: 2px solid #ccc;
    border-radius: 6px;
    background: #fff;
    font-size: 24px;
}
.file-btn svg {
    width: 26px;
    height: 26px;
    fill: currentColor;
}
.upload {
    width: 128px;
    margin: 9px 9px 0 auto;
    gap: 12px;
}
.outline {
    display: flex;
    line-height: 54px;
}
.outline input {
    appearance: none;
    width: 25px;
    height: 25px;
    margin-top: 11px;
    border: 2px solid #777;
    border-radius: 4px;
    background: #fff;
}
.panel-msg {
    padding-top: 20px;
    height: 300px;
}
.panel-msg .panel-head {
    margin-bottom: 20px;
}
.panel-msg h2 {
    margin-top: 5px;
}
.message {
    width: 100%;
    padding: 0 6px 0 17px;
    border-spacing: 0;
    table-layout: fixed;
}
.message th {
    padding: 0;
    text-align: left;
    line-height: 32px;
}
.message .c-arrow { width: 56px; }
.message .c-symbol { width: 69px; }
.message .c-colour { text-align: right; }

/* Floor plan */
.map {
    flex: 1;
    min-width: 0;
    margin-top: 28px;
    border-top: 1px solid #eee;
    box-shadow: inset 6px 0 6px -4px rgba(0, 0, 0, 0.25);
}
.plan {
    display: block;
    width: 100%;
    height: calc(100% + 29px);
    margin-top: -29px;
}
.ink {
    fill: none;
    stroke: #333;
}
.wall { stroke: #777; stroke-width: 2.5; }
.thin { stroke: #888; stroke-width: 1.8; }
.faint { stroke: #bbb; stroke-width: 1.5; }
.bars { stroke: #555; stroke-width: 2.5; }
.belts { stroke: #111; }
.marks { stroke: #555; }
.rooms { stroke: #888; stroke-dasharray: 2 5 4 4 1 6; }
.dots { stroke: #888; stroke-width: 4; stroke-dasharray: 3 43; }
.pins { opacity: 0.85; }
.pins circle { opacity: 0.6; }
.pins-soft { fill: #6be8ff; opacity: 0.8; }
```
